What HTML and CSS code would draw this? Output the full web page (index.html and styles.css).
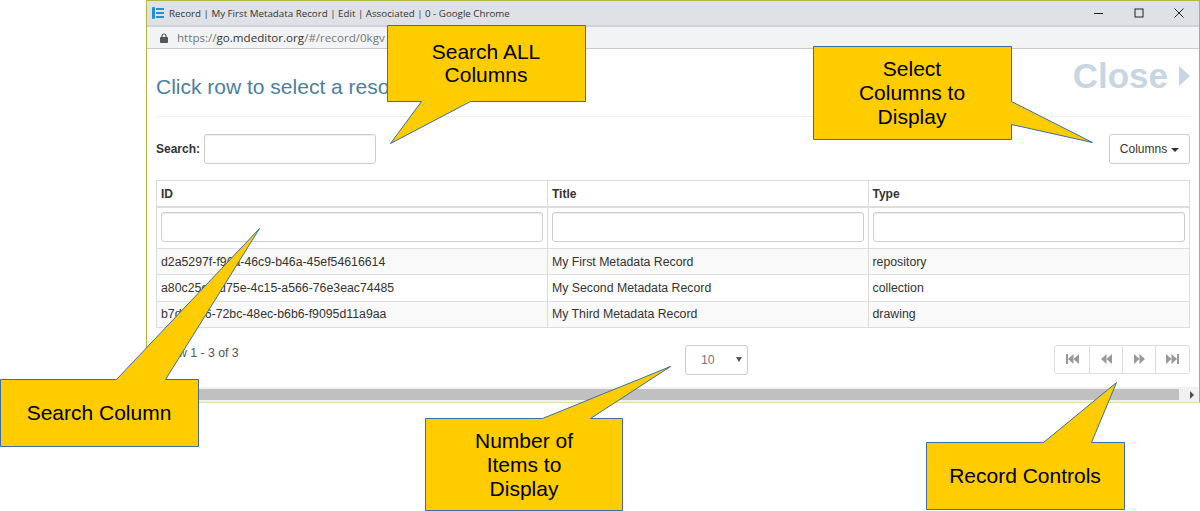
FILE: index.html
```html
<!DOCTYPE html>
<html lang="en">
<head>
    <meta charset="UTF-8">
    <title>Record | My First Metadata Record</title>
    <link rel="stylesheet" href="styles.css">
</head>
<body>
    <div class="window">
        <div class="titlebar">
            <svg class="app-icon" width="12" height="12" viewBox="0 0 12 12">
                <rect x="0" y="0" width="3" height="12" rx="1" fill="#2a8fc9"/>
                <path d="M4 2h8M4 6h8M4 10h8" stroke="#2a8fc9" stroke-width="2"/>
            </svg>
            <span class="title-text">Record | My First Metadata Record | Edit | Associated | 0 - Google Chrome</span>
            <div class="win-controls">
                <svg width="10" height="10" viewBox="0 0 10 10"><path d="M0 5.500h9" stroke="#222" stroke-width="1"/></svg>
                <svg width="10" height="10" viewBox="0 0 10 10"><rect x="1" y="1" width="8" height="8" fill="none" stroke="#222" stroke-width="1"/></svg>
                <svg width="10" height="10" viewBox="0 0 10 10"><path d="M.5.5l9 9M9.500.5l-9 9" stroke="#222" stroke-width="1"/></svg>
            </div>
        </div>
        <div class="addressbar">
            <svg width="8" height="10" viewBox="0 0 8 10"><path d="M2 4V3a2 2 0 0 1 4 0v1" fill="none" stroke="#555" stroke-width="1.200"/><rect x="0" y="4" width="8" height="6" rx="1" fill="#555"/></svg>
            <span class="url"><span class="url-dim">https://</span>go.mdeditor.org<span class="url-dim">/#/record/0kgv</span></span>
        </div>
        <div class="page">
            <div class="page-head">
                <h3 class="page-title">Click row to select a resource</h3>
                <div class="close-link">Close<svg width="11" height="20" viewBox="0 0 11 20"><path d="M0 0l11 10L0 20z" fill="#c8d6e3"/></svg></div>
            </div>
            <div class="toolbar">
                <label class="search-label" for="search">Search:</label>
                <input class="field search-input" id="search" type="text">
                <button class="columns-btn">Columns<span class="caret"></span></button>
            </div>
            <table class="records">
                <colgroup><col class="col-id"><col class="col-title"><col class="col-type"></colgroup>
                <thead>
                    <tr class="head-row"><th>ID</th><th>Title</th><th>Type</th></tr>
                    <tr class="filter-row">
                        <th><input class="field" type="text"></th>
                        <th><input class="field" type="text"></th>
                        <th><input class="field" type="text"></th>
                    </tr>
                </thead>
                <tbody>
                    <tr class="odd"><td>d2a5297f-f96a-46c9-b46a-45ef54616614</td><td>My First Metadata Record</td><td>repository</td></tr>
                    <tr><td>a80c25e0-d75e-4c15-a566-76e3eac74485</td><td>My Second Metadata Record</td><td>collection</td></tr>
                    <tr class="odd"><td>b7d3c1f6-72bc-48ec-b6b6-f9095d11a9aa</td><td>My Third Metadata Record</td><td>drawing</td></tr>
                </tbody>
            </table>
            <div class="pager-row">
                <div class="pager-info">Show 1 - 3 of 3</div>
                <div class="page-size">10<span class="select-arrow"></span></div>
                <div class="pager">
                    <span class="pager-btn"><svg width="13" height="10" viewBox="0 0 13 10"><path d="M0 0h2v10H0zM7.500 0v10L2 5zM13 0v10L7.500 5z" fill="#999"/></svg></span>
                    <span class="pager-btn"><svg width="11" height="10" viewBox="0 0 11 10"><path d="M5.500 0v10L0 5zM11 0v10L5.500 5z" fill="#999"/></svg></span>
                    <span class="pager-btn"><svg width="11" height="10" viewBox="0 0 11 10"><path d="M0 0v10l5.500-5zM5.500 0v10L11 5z" fill="#999"/></svg></span>
                    <span class="pager-btn"><svg width="13" height="10" viewBox="0 0 13 10"><path d="M0 0v10l5.500-5zM5.500 0v10L11 5zM11 0h2v10h-2z" fill="#999"/></svg></span>
                </div>
            </div>
        </div>
        <div class="scrollbar">
            <div class="scroll-thumb"></div>
            <div class="scroll-arrow"></div>
        </div>
    </div>

    <!-- callouts sit on top of the screenshot -->
    <svg class="callout-shapes" width="1200" height="511" viewBox="0 0 1200 511">
        <path d="M387.500 25.500H585.500V101.500H470.500L390.500 143.500L421.500 101.500H387.500Z"/>
        <path d="M813.500 46.500H1011.500V101.500L1092.500 142.500L1011.500 124.500V139.500H813.500Z"/>
        <path d="M.5 379.500H116.500L259.500 228.500L165.500 379.500H198.500V446.500H.5Z"/>
        <path d="M425.500 418.500H542.500L670.500 366.500L590.500 418.500H622.500V510.500H425.500Z"/>
        <path d="M926.500 442.500H1043.500L1116.500 382.500L1091.500 442.500H1124.500V509.500H926.500Z"/>
    </svg>
    <div class="callout-text c-all">Search ALL<br>Columns</div>
    <div class="callout-text c-cols">Select<br>Columns to<br>Display</div>
    <div class="callout-text c-col">Search Column</div>
    <div class="callout-text c-num">Number of<br>Items to<br>Display</div>
    <div class="callout-text c-rec">Record Controls</div>
</body>
</html>
```

FILE: styles.css
```css
html, body {
    margin: 0;
    height: 511px;
    overflow: hidden;
    background-color: #fff;
}
body {
    font-family: "Liberation Sans", Arial, sans-serif;
    font-size: 12.300px;
    color: #333;
}
.window {
    margin-left: 146px;
    width: 1054px;
    height: 403px;
    box-sizing: border-box;
    border: 1px solid #b5b53c;
    border-bottom-color: #e0e0a0;
    display: flex;
    flex-direction: column;
}
.titlebar {
    height: 24px;
    background-color: #dee1e6;
    border-bottom: 2px solid #cfd1d5;
    display: flex;
    align-items: center;
    padding-left: 5px;
    flex-shrink: 0;
}
.app-icon {
    margin-right: 5px;
}
.title-text {
    font-family: "Open Sans", sans-serif;
    font-size: 9.750px;
    color: #333;
}
.win-controls {
    margin-left: auto;
    display: flex;
    gap: 30px;
    padding-right: 15px;
}
.addressbar {
    height: 21px;
    background-color: #f1f3f4;
    border-bottom: 1px solid #c8c8c8;
    display: flex;
    align-items: center;
    padding-left: 13px;
    gap: 9px;
    flex-shrink: 0;
}
.url {
    font-family: "Open Sans", sans-serif;
    font-size: 11.600px;
    color: #333;
}
.url-dim {
    color: #777;
}
.page {
    flex: 1;
    padding: 0 9px;
    min-height: 0;
}
.page-head {
    height: 68px;
    box-sizing: border-box;
    border-bottom: 1px solid #eee;
    display: flex;
    align-items: flex-start;
    justify-content: space-between;
}
.page-title {
    margin: 26px 0 0;
    font-size: 21px;
    line-height: 24px;
    font-weight: 400;
    color: #4b7f9e;
}
.close-link {
    margin-top: 7px;
    font-size: 35px;
    line-height: 40px;
    font-weight: 700;
    color: #c8d6e3;
    display: flex;
    align-items: center;
    gap: 11px;
}
.toolbar {
    display: flex;
    align-items: center;
    margin-top: 17px;
}
.search-label {
    font-weight: 700;
    font-size: 12px;
    margin-right: 4px;
}
.field {
    display: block;
    box-sizing: border-box;
    width: 100%;
    height: 30px;
    border: 1px solid #ccc;
    border-radius: 3px;
    background-color: #fff;
    box-shadow: inset 0 1px 1px rgba(0, 0, 0, 0.075);
}
.search-input {
    width: 172px;
}
.columns-btn {
    margin-left: auto;
    width: 81px;
    height: 30px;
    padding: 0;
    background-color: #fff;
    border: 1px solid #ccc;
    border-radius: 3px;
    font-family: inherit;
    font-size: 12px;
    color: #333;
}
.caret {
    display: inline-block;
    margin-left: 4px;
    vertical-align: middle;
    border-top: 4px solid #333;
    border-left: 4px solid transparent;
    border-right: 4px solid transparent;
}
.records {
    width: 1034px;
    margin-top: 16px;
    border-collapse: collapse;
    table-layout: fixed;
}
.col-id { width: 391px; }
.col-title { width: 320.500px; }
.records th,
.records td {
    border: 1px solid #ddd;
    padding: 0 4px;
    text-align: left;
    font-size: 12.300px;
}
.head-row th {
    height: 25px;
    border-bottom-width: 2px;
    font-size: 12px;
}
.filter-row th {
    height: 35px;
    padding-top: 4px;
    padding-bottom: 1px;
    vertical-align: top;
}
.records td {
    height: 25.330px;
}
.odd td {
    background-color: #f9f9f9;
}
.pager-row {
    display: flex;
    align-items: flex-start;
    margin-top: 17px;
}
.pager-info {
    width: 529px;
    margin-top: 1px;
    color: #555;
}
.page-size {
    box-sizing: border-box;
    width: 63px;
    height: 30px;
    border: 1px solid #ccc;
    border-radius: 3px;
    padding-left: 15px;
    line-height: 28px;
    color: #777;
    display: flex;
    align-items: center;
}
.select-arrow {
    margin-left: auto;
    margin-right: 5px;
    border-top: 5px solid #555;
    border-left: 3px solid transparent;
    border-right: 3px solid transparent;
}
.pager {
    margin-left: auto;
    display: flex;
    height: 29px;
    box-sizing: border-box;
    border: 1px solid #ddd;
    border-radius: 3px;
}
.pager-btn {
    box-sizing: border-box;
    width: 33px;
    display: flex;
    align-items: center;
    justify-content: center;
    border-left: 1px solid #ddd;
}
.pager-btn:first-child {
    width: 34px;
    border-left: none;
}
.pager-btn:last-child {
    width: 34px;
}
.scrollbar {
    height: 15px;
    background-color: #f1f1f1;
    display: flex;
    flex-shrink: 0;
}
.scroll-thumb {
    flex: 1;
    height: 11px;
    margin-top: 2px;
    background-color: #c0c0c0;
}
.scroll-arrow {
    width: 0;
    height: 0;
    margin: 4px 5px 0 11px;
    border-left: 4px solid #505050;
    border-top: 4px solid transparent;
    border-bottom: 4px solid transparent;
}
.callout-shapes {
    position: absolute;
    left: 0;
    top: 0;
}
.callout-shapes path {
    fill: #ffcc00;
    stroke: #3a6ea5;
    stroke-width: 1;
}
.callout-text {
    position: absolute;
    width: 198px;
    text-align: center;
    font-size: 21px;
    line-height: 24px;
    color: #000;
}
.c-all { left: 387px; top: 40px; line-height: 23px; }
.c-cols { left: 813px; top: 57px; }
.c-col { left: 0; top: 401px; }
.c-num { left: 425px; top: 429px; }
.c-rec { left: 926px; top: 464px; }
```
